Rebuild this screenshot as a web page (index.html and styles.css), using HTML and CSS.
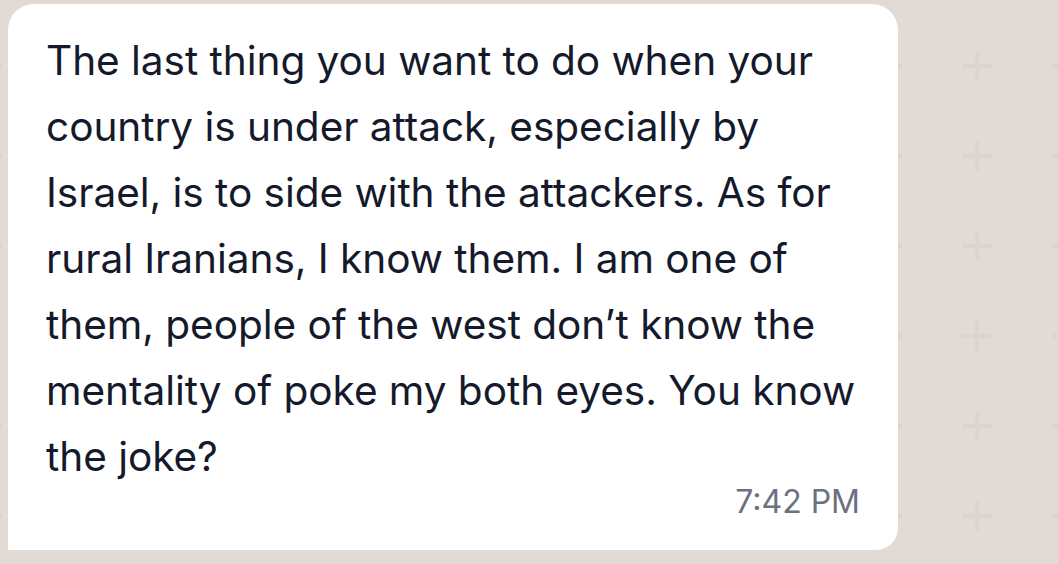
FILE: index.html
```html
<!DOCTYPE html>
<html>
<head>
<meta charset="utf-8">
<link rel="stylesheet" href="styles.css">
</head>
<body>
<svg class="pattern" width="1058" height="564" aria-hidden="true">
  <defs>
    <pattern id="plus" x="32" y="21" width="90" height="90" patternUnits="userSpaceOnUse">
      <rect x="30" y="43" width="30" height="4" fill="#dcd5cf"/>
      <rect x="43" y="30" width="4" height="30" fill="#dcd5cf"/>
    </pattern>
  </defs>
  <rect width="1058" height="564" fill="url(#plus)"/>
</svg>
<div class="bubble">
  <p class="message">The last thing you want to do when your country is under attack, especially by Israel, is to side with the attackers. As for rural Iranians, I know them. I am one of them, people of the west don’t know the mentality of poke my both eyes. You know the joke?</p>
  <div class="meta"><span class="time">7:42 PM</span></div>
</div>
</body>
</html>
```
FILE: styles.css
```css
html, body {
  margin: 0;
  padding: 0;
}
body {
  width: 1058px;
  height: 564px;
  background: #e2dbd5;
  position: relative;
  overflow: hidden;
  font-family: Inter, "Noto Sans", sans-serif;
}
.pattern {
  position: absolute;
  left: 0;
  top: 0;
}
.bubble {
  position: relative;
  margin: 4px 0 0 8px;
  width: 890px;
  height: 546px;
  box-sizing: border-box;
  background: #ffffff;
  border-radius: 26px 26px 22px 0;
  padding: 24px 30px 0 38px;
  display: flex;
  flex-direction: column;
}
.message {
  margin: 0;
  font-size: 40.6px;
  line-height: 66px;
  color: #141a2b;
  letter-spacing: -0.05px;
}
.meta {
  display: flex;
  justify-content: flex-end;
  padding-right: 8px;
  margin-top: -8px;
}
.time {
  font-size: 32px;
  line-height: 40px;
  color: #6b717e;
}
```
